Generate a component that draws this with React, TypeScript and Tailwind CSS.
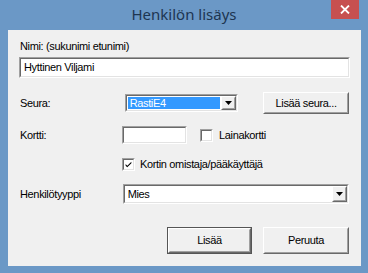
import { ReactNode } from "react";

const font = { fontFamily: '"Liberation Sans", Arial, sans-serif' };

function Sunken({ className, children }: { className: string; children?: ReactNode }) {
  return (
    <div
      className={`border border-t-[#a0a0a0] border-l-[#a0a0a0] border-b-white border-r-white ${className}`}
    >
      <div className="h-full w-full border border-t-[#696969] border-l-[#696969] border-b-[#e3e3e3] border-r-[#e3e3e3] bg-white flex items-center">
        {children}
      </div>
    </div>
  );
}

function Raised({ className, children }: { className: string; children?: ReactNode }) {
  return (
    <div
      className={`border border-t-white border-l-white border-b-[#696969] border-r-[#696969] bg-[#f0f0f0] ${className}`}
    >
      <div className="h-full w-full border border-t-[#f0f0f0] border-l-[#f0f0f0] border-b-[#a0a0a0] border-r-[#a0a0a0] flex items-center justify-center">
        {children}
      </div>
    </div>
  );
}

function DropArrow() {
  return (
    <Raised className="w-[15px] h-full shrink-0">
      <svg width="7" height="4" viewBox="0 0 7 4">
        <path d="M0 0h7L3.5 4z" fill="#000" />
      </svg>
    </Raised>
  );
}

function Check({ checked }: { checked?: boolean }) {
  return (
    <Sunken className="w-[13px] h-[13px] shrink-0">
      {checked && (
        <svg width="11" height="11" viewBox="0 0 11 11">
          <path d="M2 5l2 2 5-5v2l-5 5-2-2z" fill="#000" />
        </svg>
      )}
    </Sunken>
  );
}

export default function App() {
  return (
    <div
      className="w-[368px] h-[273px] bg-[#6b98c6] flex flex-col text-[11px] tracking-[-0.35px] text-black"
      style={font}
    >
      <div className="relative h-[30px] shrink-0 flex items-center justify-center tracking-normal">
        <span
          className="text-[15px] text-[#1d3551] pb-[1px]"
          style={{ fontFamily: '"Noto Sans", "Open Sans", sans-serif' }}
        >
          Henkilön lisäys
        </span>
        <div className="absolute top-0 right-[9px] w-[28px] h-[19px] bg-[#c75050] flex items-center justify-center">
          <svg width="10" height="9" viewBox="0 0 10 9">
            <path d="M1 0.5l8 8M9 0.5l-8 8" stroke="#fff" strokeWidth="1.8" />
          </svg>
        </div>
      </div>

      <div className="mx-[8px] mr-[7px] h-[236px] bg-[#f0f0f0] flex flex-col pl-[11px] pr-[12px]">
        <div className="mt-[10px] h-[13px] leading-[13px] pl-[1px]">Nimi: (sukunimi etunimi)</div>
        <Sunken className="mt-[4px] w-[331px] h-[21px]">
          <span className="pl-[3px]">Hyttinen Viljami</span>
        </Sunken>

        <div className="mt-[14px] h-[22px] flex items-center">
          <div className="w-[106px] pl-[1px]">Seura:</div>
          <Sunken className="w-[114px] h-[18px]">
            <div className="flex-1 h-full p-[1px]">
              <div className="h-full bg-[#3399ff] text-white flex items-center pl-[2px]">RastiE4</div>
            </div>
            <DropArrow />
          </Sunken>
          <Raised className="ml-[25px] w-[86px] h-[22px]">Lisää seura...</Raised>
        </div>

        <div className="mt-[12px] h-[18px] flex items-center">
          <div className="w-[103px] pl-[1px]">Kortti:</div>
          <Sunken className="w-[65px] h-[18px]" />
          <div className="ml-[13px]">
            <Check />
          </div>
          <span className="ml-[6px]">Lainakortti</span>
        </div>

        <div className="mt-[14px] h-[13px] flex items-center pl-[103px]">
          <Check checked />
          <span className="ml-[5px]">Kortin omistaja/pääkäyttäjä</span>
        </div>

        <div className="mt-[13px] h-[20px] flex items-center">
          <div className="w-[104px] pl-[1px]">Henkilötyyppi</div>
          <Sunken className="w-[227px] h-[20px]">
            <span className="flex-1 pl-[3px]">Mies</span>
            <DropArrow />
          </Sunken>
        </div>

        <div className="mt-[23px] flex justify-end gap-[11px]">
          <div className="border border-[#555] w-[85px] h-[27px]">
            <Raised className="w-full h-full">Lisää</Raised>
          </div>
          <Raised className="w-[86px] h-[27px]">Peruuta</Raised>
        </div>
      </div>
    </div>
  );
}
